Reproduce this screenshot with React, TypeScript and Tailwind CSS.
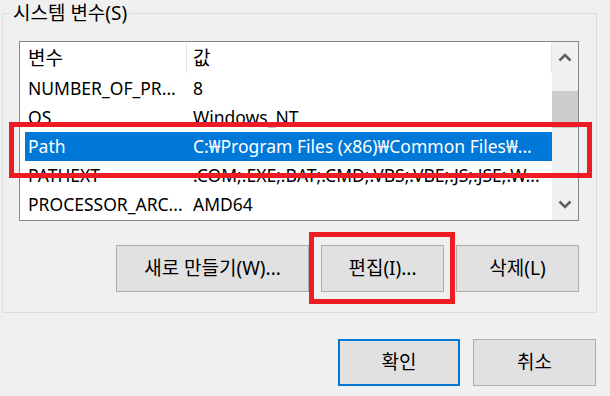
import React from 'react';

const rows = [
  { name: 'NUMBER_OF_PR...', value: '8' },
  { name: 'OS', value: 'Windows_NT' },
  { name: 'Path', value: 'C:₩Program Files (x86)₩Common Files₩...', selected: true },
  { name: 'PATHEXT', value: '.COM;.EXE;.BAT;.CMD;.VBS;.VBE;.JS;.JSE;.W...' },
  { name: 'PROCESSOR_ARC...', value: 'AMD64' },
];

function Chevron({ down = false }: { down?: boolean }) {
  return (
    <svg width="14" height="9" viewBox="0 0 14 9" className={down ? 'rotate-180' : ''}>
      <path d="M1.5 7.5 L7 2 L12.5 7.5" fill="none" stroke="#606060" strokeWidth="2.6" />
    </svg>
  );
}

function Button({ label, width, primary = false }: { label: string; width: string; primary?: boolean }) {
  return (
    <button
      className={`${width} h-[47px] bg-[#e1e1e1] flex items-center justify-center leading-none text-[19px] ${
        primary ? 'border-2 border-[#0078d7]' : 'border border-[#adadad]'
      }`}
    >
      {label}
    </button>
  );
}

export default function App() {
  return (
    <div className="relative w-[610px] h-[396px] overflow-hidden bg-[#f0f0f0] pt-[13px] pl-[2px] text-[17.5px] text-black font-['Noto_Sans','Noto_Sans_CJK_KR',sans-serif]">
      {/* System variables group */}
      <div className="relative w-[595px] h-[300px] border border-[#dcdcdc] pl-[16px] pt-[27px]">
        <div className="absolute left-[7px] top-[-13px] px-[3px] bg-[#f0f0f0] leading-[24px] text-[19px]">시스템 변수(S)</div>

        {/* List view */}
        <div className="w-[560px] h-[180px] border border-[#828790] bg-white flex">
          <div className="w-[532px] flex flex-col">
            <div className="h-[32px] flex items-center text-[19px]">
              <div className="w-[166px] pl-[8px]">변수</div>
              <div className="w-px h-[30px] bg-[#e5e5e5]" />
              <div className="pl-[6px]">값</div>
              <div className="ml-auto w-px h-[30px] bg-[#e5e5e5]" />
            </div>
            {rows.map((r) => (
              <div key={r.name} className="h-[29px] pl-[5px] flex">
                <div className={`flex-1 flex items-center whitespace-nowrap ${r.selected ? 'bg-[#0078d7] text-white' : ''}`}>
                  <div className="w-[165px] pl-[3px]">{r.name}</div>
                  <div className="pl-[3px]">{r.value}</div>
                </div>
              </div>
            ))}
          </div>

          {/* Scrollbar */}
          <div className="w-[26px] bg-[#f0f0f0] flex flex-col">
            <div className="h-[31px] flex items-center justify-center">
              <Chevron />
            </div>
            <div className="mt-[18px] h-[37px] bg-[#cdcdcd]" />
            <div className="flex-1" />
            <div className="h-[31px] flex items-center justify-center">
              <Chevron down />
            </div>
          </div>
        </div>

        <div className="w-[560px] mt-[24px] flex justify-end gap-[12px]">
          <Button label="새로 만들기(W)..." width="w-[193px]" />
          <Button label="편집(I)..." width="w-[123px]" />
          <Button label="삭제(L)" width="w-[123px]" />
        </div>
      </div>

      <div className="mt-[26px] flex justify-end gap-[13px] pr-[14px]">
        <Button label="확인" width="w-[122px]" primary />
        <Button label="취소" width="w-[123px]" />
      </div>

      {/* Red annotation boxes */}
      <div className="absolute left-[9px] top-[122px] w-[583px] h-[56px] border-[5px] border-[#ed1c24]" />
      <div className="absolute left-[309px] top-[232px] w-[146px] h-[72px] border-[5px] border-[#ed1c24]" />
    </div>
  );
}
